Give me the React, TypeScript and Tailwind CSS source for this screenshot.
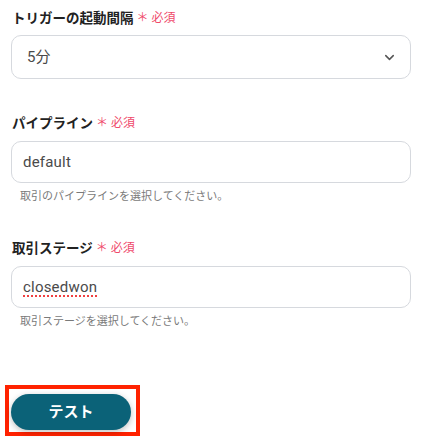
import { ChevronDown } from "lucide-react";

const font = "font-['Roboto','Noto_Sans_CJK_JP',sans-serif]";

function Label({ text }: { text: string }) {
  return (
    <div className="flex h-5 items-center pl-[1px]">
      <span className="text-[13.5px] font-bold leading-5 text-[#222]">{text}</span>
      <span className="ml-[3px] text-[12px] leading-5 text-[#ef4a6b]">＊ 必須</span>
    </div>
  );
}

function Help({ text }: { text: string }) {
  return <p className="mt-[6px] h-4 pl-[9px] text-[11px] leading-4 text-[#7a7a7a]">{text}</p>;
}

export default function App() {
  return (
    <div className={`${font} h-[447px] w-[425px] bg-white px-[11px] pt-[8px]`}>
      <Label text="トリガーの起動間隔" />
      <div className="mt-[7px] flex h-[44px] w-[400px] items-center justify-between rounded-[10px] border border-[#d6d9de] pl-[15px] pr-[13px]">
        <span className="text-[15px] text-[#4a4a4a]">5分</span>
        <ChevronDown className="h-[15px] w-[15px] text-[#555]" strokeWidth={2.4} />
      </div>

      <div className="mt-[34px]">
        <Label text="パイプライン" />
      </div>
      <div className="mt-[8px] flex h-[42px] w-[400px] items-center rounded-[10px] border border-[#d6d9de] pl-[11px]">
        <span className="text-[15px] tracking-[0.2px] text-[#4a4a4a]">default</span>
      </div>
      <Help text="取引のパイプラインを選択してください。" />

      <div className="mt-[33px]">
        <Label text="取引ステージ" />
      </div>
      <div className="mt-[8px] flex h-[42px] w-[400px] items-center rounded-[10px] border border-[#d6d9de] pl-[11px]">
        <span className="text-[15px] tracking-[0.2px] text-[#4a4a4a] underline decoration-[#f04040] decoration-dotted decoration-[1.5px] underline-offset-[4px]">
          closedwon
        </span>
      </div>
      <Help text="取引ステージを選択してください。" />

      <div className="-ml-[6px] mt-[55px] inline-flex border-[4px] border-[#ff2200] pb-[2px] pl-[2px] pr-[5px] pt-[5px]">
        <button className="flex h-[36px] w-[120px] items-center justify-center rounded-full bg-[#0b6278] text-[15px] font-bold text-white shadow-[0_2px_6px_rgba(0,0,0,0.25)]">
          テスト
        </button>
      </div>
    </div>
  );
}
